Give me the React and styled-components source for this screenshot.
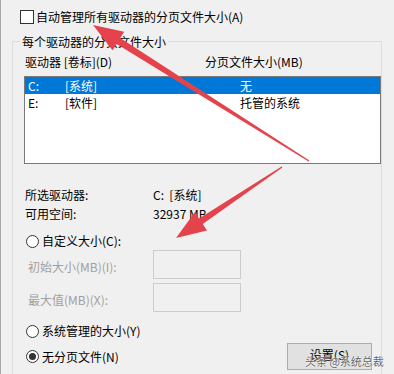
import React from 'react'
import styled, { createGlobalStyle } from 'styled-components'

const GlobalStyle = createGlobalStyle`
  html, body { margin: 0; padding: 0; background: #f0f0f0; }
  body {
    font-family: "Noto Sans CJK SC", "Noto Sans", sans-serif;
    font-size: 12px;
    line-height: 16px;
    color: #000;
  }
`

const Page = styled.div`
  position: relative;
  box-sizing: border-box;
  width: 394px;
  height: 374px;
  overflow: hidden;
  border-left: 1px solid #a8a8a8;
  padding-top: 9px;
`

const CheckRow = styled.div`
  display: flex;
  align-items: center;
  gap: 2px;
  height: 16px;
  margin-left: 19px;
  line-height: 16px;
`

const CheckBox = styled.span`
  box-sizing: border-box;
  width: 14px;
  height: 14px;
  border: 1px solid #333;
  background: #fff;
`

const Group = styled.div`
  box-sizing: border-box;
  width: 370px;
  height: 400px;
  margin: 16px 0 0 11px;
  padding: 0 0 0 11px;
  border: 1px solid #dcdcdc;
  border-bottom: none;
`

const GroupTitle = styled.div`
  width: fit-content;
  margin: -8px 0 0 -4px;
  padding: 0 2px;
  line-height: 16px;
  background: #f0f0f0;
`

const Header = styled.div`
  display: grid;
  grid-template-columns: 180px 1fr;
  margin-top: 4px;
  padding-left: 1px;
  line-height: 16px;
`

const List = styled.div`
  box-sizing: border-box;
  height: 88px;
  margin-top: 6px;
  border: 1px solid #7a7a7a;
  background: #fff;
`

const ListRow = styled.div`
  display: grid;
  grid-template-columns: 37px 175px 1fr;
  height: 17px;
  line-height: 17px;
  padding-left: 3px;
  background: ${p => (p.$selected ? '#0078d7' : 'transparent')};
  color: ${p => (p.$selected ? '#fff' : '#000')};
`

const Info = styled.div`
  display: grid;
  grid-template-columns: 128px 1fr;
  margin-top: 21px;
  padding-left: 1px;
  line-height: 19px;
`

const RadioRow = styled.label`
  display: flex;
  align-items: center;
  gap: 3px;
  height: 18px;
  margin-top: ${p => p.$top || 0}px;
  padding-left: 2px;
`

const Radio = styled.span`
  box-sizing: border-box;
  display: flex;
  align-items: center;
  justify-content: center;
  width: 13px;
  height: 13px;
  border: 1px solid #333;
  border-radius: 50%;
  background: #fff;
  &::after {
    content: '';
    width: 7px;
    height: 7px;
    border-radius: 50%;
    background: ${p => (p.$checked ? '#333' : 'transparent')};
  }
`

const SizeRow = styled.div`
  display: grid;
  grid-template-columns: 129px 88px;
  align-items: center;
  margin-top: ${p => p.$top || 0}px;
`

const SizeLabel = styled.span`
  padding: 5px 0 0 4px;
  color: #a0a0a0;
`

const SizeInput = styled.div`
  box-sizing: border-box;
  height: 29px;
  border: 1px solid #cccccc;
  background: #f0f0f0;
`

const BottomRow = styled.div`
  display: flex;
  align-items: center;
  justify-content: space-between;
  margin-top: 3px;
  padding-right: 9px;
`

const Button = styled.div`
  box-sizing: border-box;
  width: 85px;
  height: 27px;
  display: flex;
  align-items: center;
  justify-content: center;
  padding-bottom: 3px;
  border: 1px solid #adadad;
  background: #e1e1e1;
`

const Overlay = styled.svg`
  position: absolute;
  left: 0;
  top: 0;
  pointer-events: none;
`

const Watermark = styled.span`
  position: absolute;
  left: 304px;
  top: 353px;
  font-size: 11px;
  color: #666;
  text-shadow: 0 0 2px #fff, 0 0 1px #fff;
  white-space: nowrap;
`

// arrow polygon from tip to tail, tapering shaft
function arrowPoints(tip, tail, headLen = 28, headW = 10, shaftW = 3, tailW = 0.7) {
  const dx = tail[0] - tip[0]
  const dy = tail[1] - tip[1]
  const len = Math.hypot(dx, dy)
  const u = [dx / len, dy / len]
  const n = [-u[1], u[0]]
  const b = [tip[0] + u[0] * headLen, tip[1] + u[1] * headLen]
  const pts = [
    tip,
    [b[0] + n[0] * headW, b[1] + n[1] * headW],
    [b[0] + n[0] * shaftW, b[1] + n[1] * shaftW],
    [tail[0] + n[0] * tailW, tail[1] + n[1] * tailW],
    [tail[0] - n[0] * tailW, tail[1] - n[1] * tailW],
    [b[0] - n[0] * shaftW, b[1] - n[1] * shaftW],
    [b[0] - n[0] * headW, b[1] - n[1] * headW],
  ]
  return pts.map(p => p[0].toFixed(1) + ',' + p[1].toFixed(1)).join(' ')
}

export default function App() {
  return (
    <>
      <GlobalStyle />
      <Page>
        <CheckRow>
          <CheckBox />
          <span>自动管理所有驱动器的分页文件大小(A)</span>
        </CheckRow>

        <Group>
          <GroupTitle>每个驱动器的分页文件大小</GroupTitle>
          <Header>
            <span>驱动器 [卷标](D)</span>
            <span>分页文件大小(MB)</span>
          </Header>
          <List>
            <ListRow $selected>
              <span>C:</span>
              <span>[系统]</span>
              <span>无</span>
            </ListRow>
            <ListRow>
              <span>E:</span>
              <span>[软件]</span>
              <span>托管的系统</span>
            </ListRow>
          </List>

          <Info>
            <span>所选驱动器:</span>
            <span>C:&nbsp;&nbsp;[系统]</span>
            <span>可用空间:</span>
            <span>32937 MB</span>
          </Info>

          <RadioRow $top={9}>
            <Radio />
            <span>自定义大小(C):</span>
          </RadioRow>
          <SizeRow>
            <SizeLabel>初始大小(MB)(I):</SizeLabel>
            <SizeInput />
          </SizeRow>
          <SizeRow $top={4}>
            <SizeLabel>最大值(MB)(X):</SizeLabel>
            <SizeInput />
          </SizeRow>

          <RadioRow $top={10}>
            <Radio />
            <span>系统管理的大小(Y)</span>
          </RadioRow>
          <BottomRow>
            <RadioRow>
              <Radio $checked />
              <span>无分页文件(N)</span>
            </RadioRow>
            <Button>设置(S)</Button>
          </BottomRow>
        </Group>

        <Overlay width="394" height="374">
          <polygon points={arrowPoints([92, 25], [308, 161], 30, 11, 3.4)} fill="#e4434b" />
          <polygon points={arrowPoints([175, 238], [281, 167], 30, 11, 3.2)} fill="#e4434b" />
        </Overlay>
        <Watermark>头条 @系统总裁</Watermark>
      </Page>
    </>
  )
}
